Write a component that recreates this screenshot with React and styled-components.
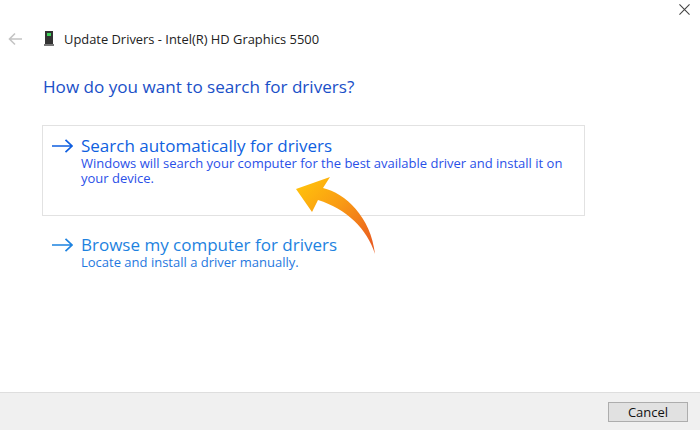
import React from 'react';
import styled, { createGlobalStyle } from 'styled-components';

const Global = createGlobalStyle`
	html, body {
		margin: 0;
		padding: 0;
		background: #fff;
	}
	body {
		font-family: 'Open Sans', 'Noto Sans', sans-serif;
	}
`;

const options = [
	{
		title: 'Search automatically for drivers',
		text: 'Windows will search your computer for the best available driver and install it on your device.',
		boxed: true,
		color: '#0f5fe0',
		textColor: '#2a50e8',
	},
	{
		title: 'Browse my computer for drivers',
		text: 'Locate and install a driver manually.',
		boxed: false,
		color: '#1d82e0',
		textColor: '#1f78e0',
	},
];

const Arrow = ({ color }) => (
	<ArrowIcon width="21" height="14" viewBox="0 0 21 14" fill="none" stroke={color} strokeWidth="1.7">
		<path d="M0 7H20M13.5 .8L20 7L13.5 13.2" />
	</ArrowIcon>
);

const App = () => {
	return (
		<Page>
			<Global />
			<Main>
				<CloseRow>
					<svg width="11" height="11" viewBox="0 0 12 12" stroke="#444" strokeWidth="1.2">
						<path d="M.5 .5L11.5 11.5M11.5 .5L.5 11.5" />
					</svg>
				</CloseRow>
				<Header>
					<svg width="14" height="14" viewBox="0 0 14 14" fill="none" stroke="#c4c4c4" strokeWidth="1.6">
						<path d="M14 7H1.5M7 1.5L1.5 7L7 12.5" />
					</svg>
					<DeviceIcon width="10" height="15" viewBox="0 0 10 15">
						<rect x="1" y="0" width="8" height="13" fill="#333" />
						<rect x="3" y="2" width="4" height="3" fill="#3fd35a" />
						<rect x="0" y="13" width="10" height="2" fill="#777" />
					</DeviceIcon>
					<Title>Update Drivers - Intel(R) HD Graphics 5500</Title>
				</Header>
				<Heading>How do you want to search for drivers?</Heading>
				{options.map((o) => (
					<Option key={o.title} $boxed={o.boxed}>
						<Arrow color={o.color} />
						<div>
							<OptionTitle $color={o.color}>{o.title}</OptionTitle>
							<OptionText $color={o.textColor}>{o.text}</OptionText>
						</div>
					</Option>
				))}
				<Callout width="82" height="80" viewBox="0 0 82 80">
					<defs>
						<linearGradient id="callout" x1="0.1" y1="0.1" x2="0.9" y2="0.9">
							<stop offset="0" stopColor="#ffbe0c" />
							<stop offset="0.45" stopColor="#f99a14" />
							<stop offset="1" stopColor="#ea5f20" />
						</linearGradient>
					</defs>
					<path
						d="M1 12L35 0L28 11C50 16 76 40 80 77C72 52 52 32 23 23L17 35Z"
						fill="url(#callout)"
					/>
				</Callout>
			</Main>
			<Footer>
				<CancelButton>Cancel</CancelButton>
			</Footer>
		</Page>
	);
};

export default App;

const Page = styled.div`
	width: 700px;
	height: 430px;
	display: flex;
	flex-direction: column;
	overflow: hidden;
`;
const Main = styled.div`
	flex: 1;
	position: relative;
	padding: 0 12px 0 8px;
`;
const CloseRow = styled.div`
	box-sizing: border-box;
	height: 18px;
	padding-top: 4px;
	display: flex;
	justify-content: flex-end;
	svg {
		margin-right: -2px;
	}
`;
const Header = styled.div`
	display: flex;
	align-items: center;
	height: 15px;
	margin-top: 13px;
`;
const DeviceIcon = styled.svg`
	margin-left: 22px;
`;
const Title = styled.span`
	margin-left: 10px;
	font-size: 12.9px;
	color: #222;
	white-space: nowrap;
`;
const Heading = styled.h1`
	margin: 30px 0 0 35px;
	font-size: 17.1px;
	line-height: 22px;
	font-weight: 400;
	color: #1a50c8;
`;
const Option = styled.div`
	box-sizing: border-box;
	width: 543px;
	height: ${(p) => (p.$boxed ? '91px' : '60px')};
	margin: ${(p) => (p.$boxed ? '27px' : '17px')} 0 0 34px;
	padding: ${(p) => (p.$boxed ? '9px' : '0')} 9px 0 9px;
	border: 1px solid ${(p) => (p.$boxed ? '#e2e2e2' : 'transparent')};
	display: flex;
	gap: 8px;
`;
const ArrowIcon = styled.svg`
	flex: none;
	margin-top: 4px;
`;
const OptionTitle = styled.div`
	font-size: 17px;
	line-height: 21px;
	color: ${(p) => p.$color};
`;
const OptionText = styled.div`
	font-size: 13px;
	line-height: 15px;
	color: ${(p) => p.$color};
`;
const Callout = styled.svg`
	position: absolute;
	left: 295px;
	top: 177px;
`;
const Footer = styled.div`
	height: 38px;
	box-sizing: border-box;
	background: #f0f0f0;
	border-top: 1px solid #dedede;
	display: flex;
	justify-content: flex-end;
	align-items: flex-start;
	padding: 9px 12px 0 0;
`;
const CancelButton = styled.button`
	width: 80px;
	height: 20px;
	padding: 0;
	background: #e1e1e1;
	border: 1px solid #adadad;
	font-family: inherit;
	font-size: 13px;
	color: #111;
`;
